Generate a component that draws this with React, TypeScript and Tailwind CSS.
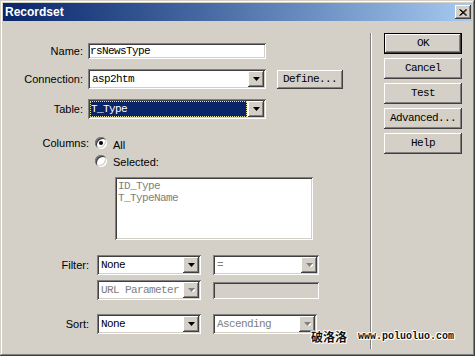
const sans = "font-['Liberation_Sans',Arial,sans-serif] text-[11px] text-black"
const mono = "font-['Liberation_Mono',monospace] text-[11px] tracking-[-0.6px]"
const sunken =
  'shadow-[inset_1px_1px_0_#808080,inset_-1px_-1px_0_#ffffff,inset_2px_2px_0_#404040,inset_-2px_-2px_0_#d4d0c8]'
const raised =
  'shadow-[inset_-1px_-1px_0_#404040,inset_1px_1px_0_#ffffff,inset_-2px_-2px_0_#808080,inset_2px_2px_0_#d4d0c8]'

function Arrow({ disabled }: { disabled?: boolean }) {
  return (
    <div className={`w-[16px] h-full bg-[#d4d0c8] flex items-center justify-center ${raised}`}>
      <svg width="7" height="4" viewBox="0 0 7 4">
        {disabled && <path d="M1 1h7L4.5 5z" fill="#ffffff" />}
        <path d="M0 0h7L3.5 4z" fill={disabled ? '#808080' : '#000000'} />
      </svg>
    </div>
  )
}

function Combo({
  text,
  width,
  disabled,
  active,
}: {
  text: string
  width: string
  disabled?: boolean
  active?: boolean
}) {
  return (
    <div className={`${width} h-[20px] p-[2px] flex bg-white ${sunken}`}>
      <div className="flex-1 flex items-stretch pr-[1px]">
        {active ? (
          <div className="flex-1 flex items-center bg-[#0a246a] text-white pl-[1px] outline-1 outline-dotted outline-[#e0e0a0] -outline-offset-1">
            <span className={mono}>{text}</span>
          </div>
        ) : (
          <div className={`flex-1 flex items-center pl-[2px] ${disabled ? 'text-[#808080]' : 'text-black'}`}>
            <span className={mono}>{text}</span>
          </div>
        )}
      </div>
      <Arrow disabled={disabled} />
    </div>
  )
}

function Button({ label, isDefault, width = 'w-[78px]', height = 'h-[21px]' }: { label: string; isDefault?: boolean; width?: string; height?: string }) {
  return (
    <div
      className={`${width} ${height} flex items-center justify-center bg-[#d4d0c8] text-black ${
        isDefault ? 'border border-black' : ''
      } ${raised}`}
    >
      <span className={mono}>{label}</span>
    </div>
  )
}

function Radio({ checked }: { checked?: boolean }) {
  return (
    <div className={`w-[12px] h-[12px] rounded-full bg-white flex items-center justify-center ${sunken}`}>
      {checked && <div className="w-[4px] h-[4px] rounded-full bg-black" />}
    </div>
  )
}

export default function App() {
  return (
    <div
      className={`relative w-[475px] h-[356px] bg-[#d4d0c8] p-[3px] flex flex-col shadow-[inset_-1px_-1px_0_#404040,inset_1px_1px_0_#d4d0c8,inset_-2px_-2px_0_#808080,inset_2px_2px_0_#ffffff]`}
    >
      {/* title bar */}
      <div className="h-[18px] bg-linear-to-r from-[#0a246a] to-[#a6caf0] flex items-center justify-between pl-[2px] pr-[1px]">
        <span className="font-['Liberation_Sans',Arial,sans-serif] text-[12px] font-bold text-white leading-none">
          Recordset
        </span>
        <div className={`w-[16px] h-[14px] bg-[#d4d0c8] flex items-center justify-center ${raised}`}>
          <svg width="8" height="7" viewBox="0 0 8 7">
            <path d="M0.5 0.5L7 6.5M1.5 0.5L8 6.5M7 0.5L0.5 6.5M8 0.5L1.5 6.5" stroke="#000" strokeWidth="1" />
          </svg>
        </div>
      </div>

      <div className="flex flex-1">
        {/* form */}
        <div className={`w-[367px] flex flex-col ${sans}`}>
          <div className="mt-[22px] h-[16px] flex items-center">
            <span className="w-[80px] text-right">Name:</span>
            <div className={`ml-[5px] w-[178px] h-[16px] bg-white flex items-center pl-[2px] ${sunken}`}>
              <span className={mono}>rsNewsType</span>
            </div>
          </div>

          <div className="mt-[10px] h-[20px] flex items-center">
            <span className="w-[80px] text-right">Connection:</span>
            <div className="ml-[5px]">
              <Combo text="asp2htm" width="w-[178px]" />
            </div>
            <div className="ml-[11px]">
              <Button label="Define..." width="w-[66px]" height="h-[19px]" />
            </div>
          </div>

          <div className="mt-[10px] h-[20px] flex items-center">
            <span className="w-[80px] text-right">Table:</span>
            <div className="ml-[5px]">
              <Combo text="T_Type" width="w-[178px]" active />
            </div>
          </div>

          <div className="mt-[18px] h-[12px] flex items-center">
            <span className="w-[86px] text-right">Columns:</span>
            <div className="ml-[6px]">
              <Radio checked />
            </div>
            <span className="ml-[6px] mt-[4px]">All</span>
          </div>

          <div className="mt-[6px] h-[12px] flex items-center">
            <div className="ml-[92px]">
              <Radio />
            </div>
            <span className="ml-[6px] mt-[2px]">Selected:</span>
          </div>

          <div className={`mt-[10px] ml-[112px] w-[198px] h-[63px] bg-white pt-[3px] pl-[3px] flex flex-col leading-[12px] text-[#808080] ${sunken}`}>
            <span className={mono}>ID_Type</span>
            <span className={mono}>T_TypeName</span>
          </div>

          <div className="mt-[15px] h-[20px] flex items-center">
            <span className="w-[86px] text-right">Filter:</span>
            <div className="ml-[8px]">
              <Combo text="None" width="w-[104px]" />
            </div>
            <div className="ml-[12px]">
              <Combo text="=" width="w-[106px]" disabled />
            </div>
          </div>

          <div className="mt-[5px] h-[20px] flex items-center">
            <div className="ml-[94px]">
              <Combo text="URL Parameter" width="w-[104px]" disabled />
            </div>
            <div className={`ml-[12px] w-[106px] h-[17px] bg-[#d4d0c8] ${sunken}`} />
          </div>

          <div className="mt-[14px] h-[20px] flex items-center">
            <span className="w-[86px] text-right">Sort:</span>
            <div className="ml-[8px]">
              <Combo text="None" width="w-[104px]" />
            </div>
            <div className="ml-[12px]">
              <Combo text="Ascending" width="w-[104px]" disabled />
            </div>
          </div>
        </div>

        {/* separator */}
        <div className="mt-[12px] mb-[4px] w-[2px] border-l border-l-[#808080] border-r border-r-white" />

        {/* buttons */}
        <div className="pl-[12px] mt-[12px] flex flex-col gap-[4px]">
          <Button label="OK" isDefault />
          <Button label="Cancel" />
          <Button label="Test" />
          <Button label="Advanced..." />
          <Button label="Help" />
        </div>
      </div>

      {/* watermark */}
      <div className="absolute left-[311px] top-[331px] flex items-center gap-[11px] text-[#111] [text-shadow:1px_0_0_#fff,-1px_0_0_#fff,0_1px_0_#fff,0_-1px_0_#fff,1px_1px_0_#fff,-1px_-1px_0_#fff]">
        <span className="font-['Noto_Sans_CJK_SC',sans-serif] text-[12px] font-bold leading-none">破洛洛</span>
        <span className="font-['Liberation_Mono',monospace] text-[10px] font-bold leading-none">www.poluoluo.com</span>
      </div>
    </div>
  )
}
